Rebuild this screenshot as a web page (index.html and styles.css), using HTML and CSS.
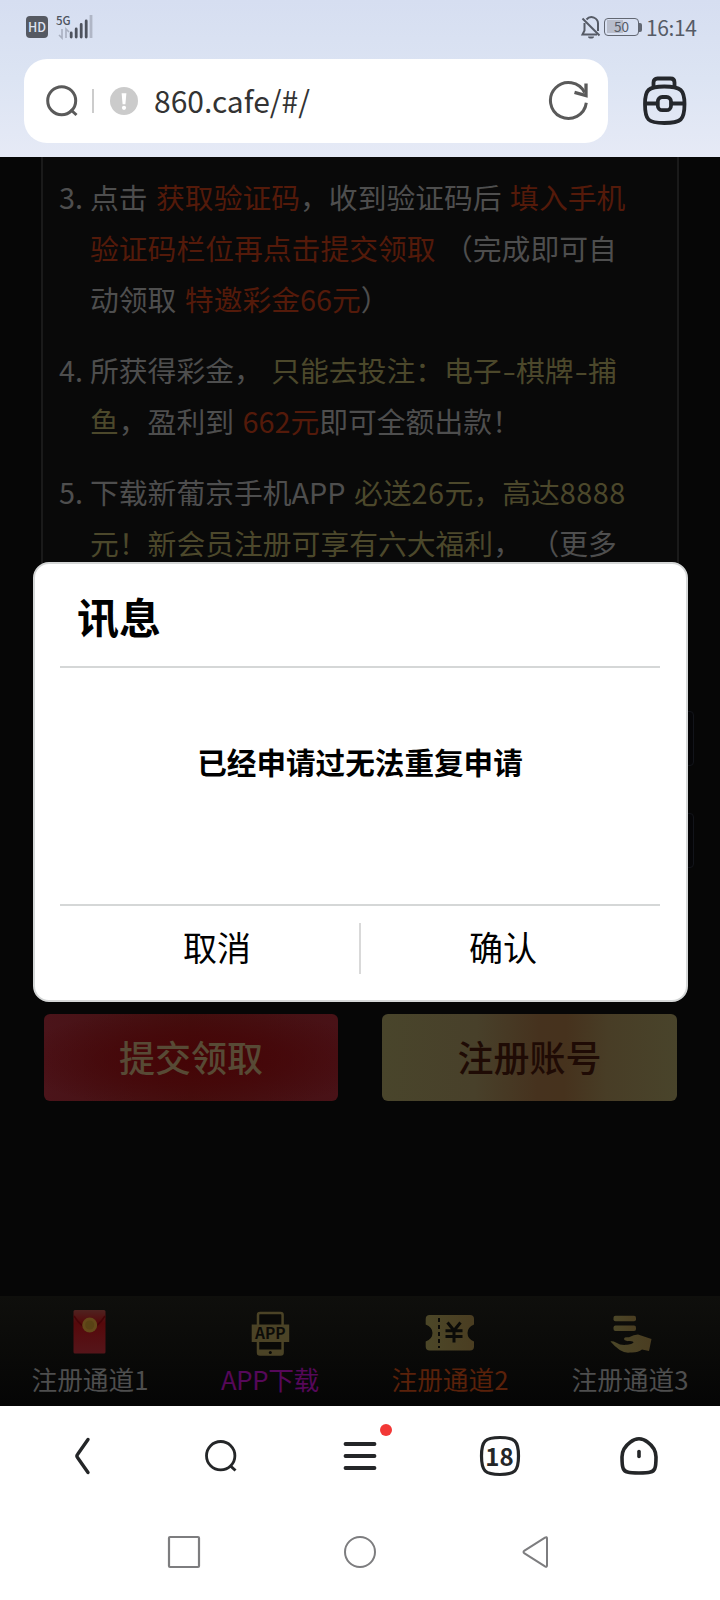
FILE: index.html
```html
<!DOCTYPE html>
<html lang="zh-CN">
<head>
<meta charset="utf-8">
<title>860.cafe</title>
<link rel="stylesheet" href="styles.css">
</head>
<body>
<div class="phone">
  <header class="top">
    <div class="status">
      <div class="status-left">
        <span class="hd">HD</span>
        <span class="signal">
          <span class="net">5G</span>
          <svg width="38" height="26" viewBox="0 0 38 26">
            <g fill="none" stroke="#a9b0c0" stroke-width="1.6"><path d="M6 15v9l-3-3M10 24v-9l3 3"/></g>
            <g stroke="#4e535e" stroke-width="2.8" stroke-linecap="round"><path d="M15.200 19v4M20.200 15v8M25.200 10.500v12.500M30.200 7v16"/></g>
            <path d="M35 1v23" stroke="#b0b6c6" stroke-width="2.8"/>
          </svg>
        </span>
      </div>
      <div class="status-right">
        <svg class="bell" width="22" height="24" viewBox="0 0 22 24" fill="none" stroke="#565b66" stroke-width="2">
          <path d="M6.500 3.500a6.500 6.500 0 0 1 11.500 4.500v7M4.500 7v7.500L2.500 18.500H17"/><path d="M2.500 2.500l17 17"/><path d="M8 20.500h6a3 2 0 0 1-6 0z" fill="#565b66" stroke="none"/>
        </svg>
        <span class="battery"><span class="battery-text">50</span></span><span class="battery-tip"></span>
        <span class="clock">16:14</span>
      </div>
    </div>
    <div class="address-row">
      <div class="address">
        <svg class="glass" width="36" height="36" viewBox="0 0 36 36" fill="none" stroke="#5a5a5a" stroke-width="3"><circle cx="17.700" cy="17.700" r="14"/><path d="M26.500 26.500l6 5.500"/></svg>
        <span class="address-line"></span>
        <svg class="warn" width="28" height="28" viewBox="0 0 28 28"><circle cx="14" cy="14" r="14" fill="#cbcbcb"/><path d="M11.600 6.200h4.800l-1 11h-2.800z" fill="#fff"/><circle cx="14" cy="20.800" r="2.100" fill="#fff"/></svg>
        <span class="url">860.cafe/#/</span>
        <svg class="reload" width="42" height="42" viewBox="0 0 42 42" fill="none" stroke="#5a5a5a" stroke-width="3"><path d="M39.300 22.800A18 18 0 1 1 37.600 12.500"/><path d="M39 3.500V15.500L27.500 12.300" stroke-width="3.300"/></svg>
      </div>
      <svg class="bag" width="48" height="52" viewBox="0 0 48 52" fill="none" stroke="#24272c" stroke-width="3.800"><path d="M12.500 12V7.500Q12.500 3.500 16.500 3.500H29.500Q33.500 3.500 33.500 7.500V12"/><path d="M23.300 11.500C40 11.500 43.500 15 43.500 29C43.500 45 40 48 23.300 48C7 48 4 45 4 29C4 15 7 11.500 23.300 11.500z"/><path d="M4 28.500H16M31 28.500H43"/><rect x="16.800" y="22" width="13.200" height="13.200" rx="4.500"/></svg>
    </div>
  </header>

  <main class="page">
    <section class="rules">
      <div class="rule"><span class="num">3.</span><p class="rule-text"><span class="line">点击 <em class="red">获取验证码</em>，收到验证码后 <em class="red">填入手机</em></span><span class="line"><em class="red">验证码栏位再点击提交领取</em> （完成即可自</span><span class="line">动领取 <em class="red">特邀彩金66元</em>）</span></p></div>
      <div class="rule"><span class="num">4.</span><p class="rule-text"><span class="line">所获得彩金， <em class="gold">只能去投注：电子<i class="dash">-</i>棋牌<i class="dash">-</i>捕</em></span><span class="line"><em class="gold">鱼</em>，盈利到 <em class="red">662元</em>即可全额出款！</span></p></div>
      <div class="rule"><span class="num">5.</span><p class="rule-text"><span class="line">下载新葡京手机APP <em class="gold">必送<i class="digits">26</i>元，高达<i class="digits">8888</i></em></span><span class="line"><em class="gold">元！新会员注册可享有六大福利</em>， （更多</span></p></div>
    </section>
    <div class="fields"><div class="field"></div><div class="field"></div></div>
    <div class="actions"><div class="btn btn-submit">提交领取</div><div class="btn btn-register">注册账号</div></div>
  </main>

  <nav class="tabs">
    <div class="tab">
      <svg width="50" height="48" viewBox="0 0 50 48"><defs><linearGradient id="env" x1="0" y1="0" x2="0" y2="1"><stop offset="0" stop-color="#4f2320"/><stop offset=".3" stop-color="#56090b"/><stop offset="1" stop-color="#55151a"/></linearGradient><linearGradient id="brass" x1="0" y1="0" x2="1" y2="0"><stop offset="0" stop-color="#4c4728"/><stop offset="1" stop-color="#4a3d21"/></linearGradient></defs><rect x="8.500" y="2" width="32" height="43.500" rx="1.500" fill="url(#env)"/><path d="M9 8Q16 19 24.500 21.500Q33 19 40 8" fill="none" stroke="#450407" stroke-width="1.500"/><circle cx="24.700" cy="17" r="7.500" fill="#64491a"/><circle cx="24.700" cy="17" r="4.500" fill="#594315"/></svg>
      <span>注册通道1</span>
    </div>
    <div class="tab tab-purple">
      <svg width="50" height="48" viewBox="0 0 50 48"><rect x="13" y="5" width="24.600" height="41.500" rx="2" fill="#090907" stroke="#4b4326" stroke-width="2.500"/><path d="M13 41.500h24.600V46.500H13z" fill="#4b4326"/><circle cx="25.300" cy="44.500" r="1.500" fill="#090907"/><rect x="6.700" y="16.500" width="37.500" height="17.500" fill="#4b4326"/><text class="app-mark" x="25.300" y="31" text-anchor="middle">APP</text></svg>
      <span>APP下载</span>
    </div>
    <div class="tab tab-orange">
      <svg width="50" height="48" viewBox="0 0 50 48"><path d="M4.700 7H45Q49 7 49 11V16.500Q42.500 19 42.500 25Q42.500 31 49 33.500V38.500Q49 42.500 45 42.500H4.700Q.7 42.500 .7 38.500V33.500Q7.500 31 7.500 25Q7.500 19 .7 16.500V11Q.7 7 4.700 7z" fill="url(#brass)"/><path d="M14 10v30" stroke="#0b0b08" stroke-width="2" stroke-dasharray="4 3"/><path d="M22.500 14.500l6.500 8 6.500-8M20.500 22.700h17M20.500 28.500h17M29 22.500v12" fill="none" stroke="#0b0b08" stroke-width="3"/></svg>
      <span>注册通道2</span>
    </div>
    <div class="tab">
      <svg width="50" height="48" viewBox="0 0 50 48" fill="url(#brass)"><rect x="8.500" y="7.800" width="22.500" height="5.500" rx="2"/><rect x="8.500" y="17.500" width="22.500" height="5.500" rx="2"/><path d="M5.500 33.500C8 32.500 12 35 15 36.500C20 37.500 27 36.500 28.500 34.500C29 32.500 22 34 19.500 32C18 29.500 21 29 24 29.300Q29 26.500 33 26.500L46.500 31L44 43L37 41.500Q33 45 25 44.500Q16 46 5.500 33.500z"/></svg>
      <span>注册通道3</span>
    </div>
  </nav>

  <footer class="bottom">
    <div class="toolbar">
      <svg width="42" height="42" viewBox="0 0 42 42"><path d="M27 4.500L16.500 19.500Q15.300 21 16.500 22.500L27 37.500" fill="none" stroke="#242628" stroke-width="3.400" stroke-linecap="round"/></svg>
      <svg width="42" height="42" viewBox="0 0 42 42" fill="none" stroke="#242628" stroke-width="2.800"><circle cx="20.700" cy="20.700" r="14.200"/><path d="M30.500 31l5 4.500" stroke-width="3"/></svg>
      <span class="menu"><svg width="42" height="42" viewBox="0 0 42 42"><path d="M6.500 9h29M6.500 21h29M6.500 33h29" stroke="#242628" stroke-width="3.800" stroke-linecap="round"/></svg><span class="dot"></span></span>
      <span class="count"><svg width="42" height="42" viewBox="0 0 42 42"><path d="M21 2.500C36 2.500 39.500 6 39.500 21C39.500 36 36 39.500 21 39.500C6 39.500 2.500 36 2.500 21C2.500 6 6 2.500 21 2.500z" fill="none" stroke="#242628" stroke-width="3.200"/></svg><span class="count-text">18</span></span>
      <svg width="42" height="42" viewBox="0 0 42 42" fill="none" stroke="#242628" stroke-width="3.600" stroke-linecap="round"><path d="M21 3.800C24 3.800 27 5 29.500 7C35 11 38 15.500 38 22C38 27 38 31 36.800 33.500C35.500 37 32 38 21 38C10 38 6.500 37 5.200 33.500C4 31 4 27 4 22C4 15.500 7 11 12.500 7C15 5 18 3.800 21 3.800z"/><path d="M21 16.500v5"/></svg>
    </div>
    <div class="sysnav">
      <svg width="34" height="34" viewBox="0 0 34 34" fill="none" stroke="#7d7d7f" stroke-width="2.200"><rect x="2" y="2" width="30" height="30" rx="1"/></svg>
      <svg width="34" height="34" viewBox="0 0 34 34" fill="none" stroke="#7d7d7f" stroke-width="2"><circle cx="17" cy="17" r="15"/></svg>
      <svg width="34" height="34" viewBox="0 0 34 34" fill="none" stroke="#7d7d7f" stroke-width="2" stroke-linejoin="round"><path d="M29 3.500V30.500Q29 32.500 27 31.300L6.500 18.300Q4.500 17 6.500 15.700L27 2.700Q29 1.500 29 3.500z"/></svg>
    </div>
  </footer>

  <div class="dialog">
    <h1 class="dialog-title">讯息</h1>
    <p class="dialog-message">已经申请过无法重复申请</p>
    <div class="dialog-actions"><span>取消</span><i class="dialog-split"></i><span>确认</span></div>
  </div>
</div>
</body>
</html>
```
FILE: styles.css
```css
* { box-sizing: border-box; }
body { margin: 0; font-family: "Noto Sans CJK SC", sans-serif; background: #fff; }
svg { display: block; flex: none; }
em, i { font-style: normal; }
.phone { position: relative; width: 720px; height: 1600px; overflow: hidden; display: flex; flex-direction: column; }

.top { height: 157px; flex: none; background: linear-gradient(#d6def1, #dce4f3 50%, #e6eaf6); }
.status { height: 59px; display: flex; justify-content: space-between; padding: 15px 23px 0 26px; }
.status-left, .status-right { display: flex; align-items: flex-start; }
.hd { width: 22px; height: 22px; margin-top: 1px; border-radius: 4px; background: #555962; color: #dde3f2; font: 500 12.500px/22px "Noto Sans CJK SC", sans-serif; text-align: center; }
.signal { position: relative; margin-left: 8px; }
.signal svg { margin-top: -1px; }
.net { position: absolute; left: 0; top: -2px; font: 500 11.500px/14px "Noto Sans CJK SC", sans-serif; color: #4e535e; }
.bell { margin-top: 1px; }
.battery { width: 35px; height: 18px; margin: 3px 0 0 2px; border: 1.500px solid #626772; border-radius: 4px; background: linear-gradient(90deg, #b8bdcb 16px, transparent 16px) 2px 1px / 30px 13px no-repeat; text-align: center; }
.battery-text { display: block; font-size: 13.500px; line-height: 15px; color: #565b66; }
.battery-tip { width: 3px; height: 9px; margin-top: 7.500px; background: #626772; border-radius: 0 2px 2px 0; }
.clock { margin-left: 4px; width: 51px; font-size: 21px; line-height: 24px; color: #565b66; letter-spacing: -0.400px; white-space: nowrap; }
.address-row { display: flex; align-items: center; height: 84px; padding-left: 24px; }
.address { display: flex; align-items: center; width: 584px; height: 84px; padding: 0 19px 0 20px; border-radius: 23px; background: #fff; }
.address-line { width: 2px; height: 24px; margin-left: 12px; background: #ccc; }
.warn { margin-left: 16px; }
.url { margin: -3px 0 0 16px; flex: 1; font-size: 30px; line-height: 40px; color: #333; white-space: nowrap; }
.bag { margin-left: 32.500px; }

.page { height: 1139px; flex: none; background: #060606; overflow: hidden; }
.rules { width: 638px; height: 483px; margin-left: 41px; padding: 14px 0 0 16px; border: solid #1a1a1a; border-width: 0 2px 2px; background: #090909; color: #4e4e4e; }
.rule { display: flex; margin-bottom: 20px; font-size: 28.800px; line-height: 51px; }
.num { width: 31px; flex: none; }
.rule-text { margin: 0; text-spacing-trim: space-all; word-spacing: 2px; }
.line { display: block; white-space: nowrap; }
.red { color: #541a0a; }
.gold { color: #4c482b; }
.dash { display: inline-block; width: 14.400px; text-align: center; transform: scaleX(1.350); }
.digits { letter-spacing: 0.500px; }
.fields { display: grid; gap: 47px; width: 650px; margin: 71px 0 0 44px; }
.field { height: 55px; border: 1.500px solid #12141a; border-radius: 4px; background: #050507; }
.actions { display: flex; gap: 44px; margin: 146px 0 0 44px; }
.btn { width: 294px; height: 87px; border-radius: 6px; font-size: 36px; font-weight: 500; line-height: 85px; text-align: center; }
.btn-submit { color: #574a35; background: radial-gradient(ellipse 62% 60% at 52% 52%, #450406, rgba(69,4,6,.6) 50%, rgba(69,4,6,0)), linear-gradient(90deg, #4b141a, #43100f 50%, #491217); }
.btn-register { width: 295px; color: #1f0b05; background: linear-gradient(92deg, #49452b, #48402a 32%, #46321e 53%, #46321d 62%, #483d26 76%, #49442b); }

.tabs { display: grid; grid-template-columns: repeat(4, 180px); height: 110px; flex: none; background: linear-gradient(#0f0f0c, #050505); color: #4e4e4e; }
.tab { display: flex; flex-direction: column; align-items: center; padding-top: 12px; font-size: 25.700px; line-height: 38px; white-space: nowrap; }
.tab span { margin-top: 4px; }
.tab-purple { color: #56085a; }
.tab-purple span { letter-spacing: -0.300px; }
.tab-orange { color: #5a210a; }
.app-mark { font: bold 15.500px "Noto Sans CJK SC", sans-serif; fill: #0b0b08; }

.bottom { height: 194px; background: #fff; }
.toolbar, .sysnav { display: grid; justify-items: center; align-items: center; }
.toolbar { grid-template-columns: repeat(5, 139.300px); height: 100px; padding-left: 12px; }
.sysnav { grid-template-columns: repeat(3, 175.700px); height: 92px; padding-left: 96px; }
.menu, .count { position: relative; }
.dot { position: absolute; right: -11px; top: -11px; width: 12px; height: 12px; border-radius: 50%; background: #f23836; }
.count-text { position: absolute; inset: 0; font-size: 24px; font-weight: 700; line-height: 42px; text-align: center; color: #242628; }

.dialog { position: absolute; left: 33px; top: 562px; width: 655px; height: 440px; padding: 0 26px 0 25px; border: 2px solid #d5d7d7; border-radius: 16px; background: #fff; color: #000; }
.dialog-title { height: 104px; margin: 0; padding-left: 17px; border-bottom: 2px solid #d5d7d7; font-size: 42px; font-weight: 700; line-height: 103px; }
.dialog-message { height: 238px; margin: 0; border-bottom: 2px solid #d5d7d7; font-size: 29.600px; font-weight: 700; line-height: 188px; text-align: center; }
.dialog-actions { display: grid; grid-template-columns: 1fr 2px 1fr; padding: 17px 15px; font-size: 34px; line-height: 47px; text-align: center; }
.dialog-split { height: 51px; background: #d9d9d9; }
```
